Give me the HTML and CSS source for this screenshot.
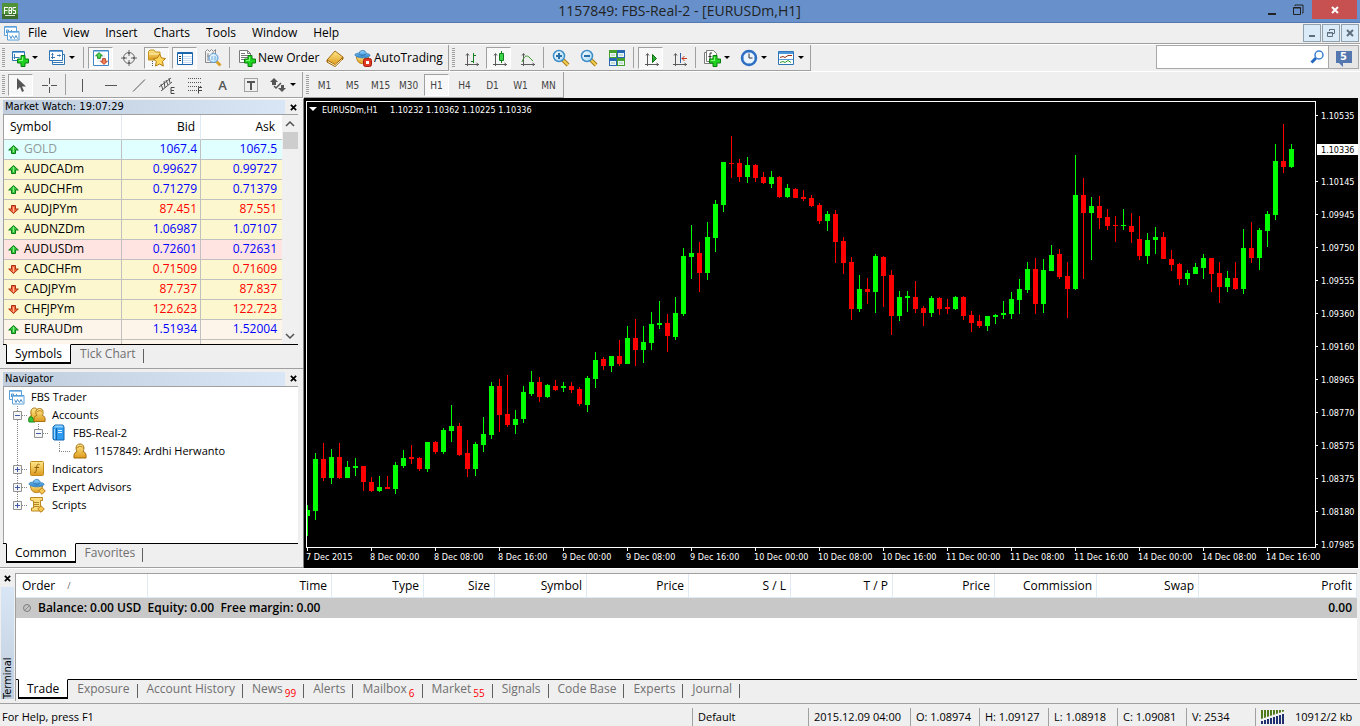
FILE: index.html
```html
<!DOCTYPE html>
<html lang="en">
<head>
<meta charset="utf-8">
<title>1157849: FBS-Real-2 - [EURUSDm,H1]</title>
<link rel="stylesheet" href="styles.css">
</head>
<body>
<svg class="defs" aria-hidden="true">
  <defs>
    <linearGradient id="gold" x1="0" y1="0" x2="0" y2="1"><stop offset="0" stop-color="#ffe88a"/><stop offset="1" stop-color="#dc9a1c"/></linearGradient>
    <linearGradient id="blue" x1="0" y1="0" x2="0" y2="1"><stop offset="0" stop-color="#8fd0fa"/><stop offset="1" stop-color="#2c86d0"/></linearGradient>
    <linearGradient id="lens" x1="0" y1="0" x2="1" y2="1"><stop offset="0" stop-color="#fff"/><stop offset="1" stop-color="#a4d8fa"/></linearGradient>
    <symbol id="plus" viewBox="0 0 12 12"><path d="M4 .5h4V4h3.500v4H8v3.500H4V8H.5V4H4z" fill="#21d321" stroke="#087d10"/><path d="M5.500 2v3.500H2" fill="none" stroke="#8cff80"/></symbol>
    <symbol id="up" viewBox="0 0 11 9"><path d="M5.500 .5L10.300 5H7.500v3.500h-4V5H.7z" fill="#35c53a" stroke="#0e7a18"/><path d="M5.500 2v5" stroke="#8df08d"/></symbol>
    <symbol id="down" viewBox="0 0 11 9"><path d="M5.500 8.500L10.300 4H7.500V.5h-4V4H.7z" fill="#f0683a" stroke="#a93012"/><path d="M5.500 2v5" stroke="#ffb899"/></symbol>
    <symbol id="charts" viewBox="0 0 16 16"><path d="M.5 1.500h12v9H.5z" fill="#fff" stroke="#5b9fd8"/><path d="M1 2.500h11" stroke="#8fc1ea"/><path d="M2.500 8V5h2v2m3-2v2h2" fill="none" stroke="#4b92d0"/><path d="M3.500 6.500h11.500v8.500H3.500z" fill="#fff" stroke="#5b9fd8"/><path d="M4 7.500h11" stroke="#8fc1ea"/><path d="M5.500 10.500l1.500 3 1.500-3 2 3 1.500-3 1.500 3" fill="none" stroke="#4b92d0"/></symbol>
    <symbol id="axes" viewBox="0 0 16 16"><path d="M4.500 16V4M2 14.500h14M3 5.500L4.500 3.500 6 5.500M13.500 13l2 1.500-2 1.500" fill="none" stroke="#5a5a5a"/></symbol>
    <symbol id="person" viewBox="0 0 14 16"><path d="M1 15c-.5-4 1-6 3-6.500C2.500 6 2.500 1 7 1s4.500 5 3 7.500c2.500.5 3.500 2.500 3 6.500z" fill="url(#gold)" stroke="#a26b0b"/><path d="M4.500 5c1-2 2-2 5-1" fill="none" stroke="#b77a13"/></symbol>
    <symbol id="hat" viewBox="0 0 18 16"><path d="M2.500 7c.5 6 3 8 6.500 8s5.500-2 6.500-7z" fill="url(#gold)" stroke="#b77b16"/><path d="M1 6c2 3.500 13 4 16 .5 0-1.500-2-2-4-2C12.500 0 6 0 5.500 4 3 4 1 4.500 1 6z" fill="url(#blue)" stroke="#3b83bb"/><path d="M5.500 5c2 1.500 5 1.500 7 0" fill="none" stroke="#2a6ca5"/></symbol>
    <symbol id="minus-box" viewBox="0 0 9 9"><path d="M.5 .5h8v8h-8z" fill="#f6f6f6" stroke="#919191"/><path d="M2 4.500h5" stroke="#3e5aa8"/></symbol>
    <symbol id="plus-box" viewBox="0 0 9 9"><path d="M.5 .5h8v8h-8z" fill="#f6f6f6" stroke="#919191"/><path d="M2 4.500h5M4.500 2v5" stroke="#3e5aa8"/></symbol>
    <symbol id="x" viewBox="0 0 8 8"><path d="M1 1l6 6M7 1L1 7" stroke="currentColor" stroke-width="2"/></symbol>
    <symbol id="diamond" viewBox="0 0 8 8"><path d="M4 .7L7.300 4 4 7.300.7 4z" fill="#f4c850" stroke="#b77b16"/></symbol>
  </defs>
</svg>

<div class="app">
  <header class="titlebar">
    <svg class="logo" width="16" height="16"><path d="M0 0h16v16H0z" fill="#4f9238"/><path d="M0 11h16v5H0z" fill="#3c6d2c"/><path d="M2 4.500h4M2.500 4v7M3 7.500h2.500M7 4.500h2.500v6H7zM7 7.500h2.500M14 4.500h-3v3h2.500v3H11" fill="none" stroke="#fff"/><path d="M3 12.500h10" stroke="#d5e8cf"/></svg>
    <h1>1157849: FBS-Real-2 - [EURUSDm,H1]</h1>
    <div class="winbtns">
      <button aria-label="Minimize"><svg width="10" height="12"><path d="M1 9h8v2H1z" fill="#222"/></svg></button>
      <button aria-label="Restore"><svg width="12" height="12"><path d="M3 2V1h8v8h-1M1.500 3.500h7v7h-7zM1 4h8" fill="none" stroke="#222"/></svg></button>
      <button class="close" aria-label="Close"><svg width="8" height="8"><use href="#x"/></svg></button>
    </div>
  </header>

  <nav class="menubar">
    <svg width="16" height="16"><use href="#charts"/></svg>
    <button>File</button><button>View</button><button>Insert</button><button>Charts</button><button>Tools</button><button>Window</button><button>Help</button>
    <div class="childbtns">
      <button aria-label="Minimize chart"><svg width="10" height="10"><path d="M2 7h6v2H2z" fill="#5d6e7e"/></svg></button>
      <button aria-label="Restore chart"><svg width="10" height="10"><path d="M3.500 3V1.500h5v4H7M1.500 4.500h5v4h-5zM1 5h6" fill="none" stroke="#5d6e7e"/></svg></button>
      <button aria-label="Close chart"><svg width="8" height="8"><use href="#x"/></svg></button>
    </div>
  </nav>

  <div class="toolrow">
    <div class="toolbar">
      <i class="grip"></i>
      <button class="combo" aria-label="New chart"><svg width="18" height="18"><path d="M1.500 2.500h12v9h-12z" fill="#fff" stroke="#2e75b6"/><path d="M2 3.500h11" stroke="#6fa8dc"/><path d="M3.500 5v5M2.500 8.500h6" stroke="#3c78b4"/><use href="#plus" x="6" y="6" width="12" height="12"/></svg></button>
      <button class="combo" aria-label="Profiles"><svg width="18" height="18"><path d="M4.500 5.500h12v10h-12z" fill="#fff" stroke="#2e75b6"/><path d="M1.500 1.500h13v10h-13z" fill="#fff" stroke="#2e75b6"/><path d="M2 2.500h12" stroke="#6fa8dc"/><path d="M4.500 4v6M3 8.500h4M9 6.500h4M3.500 5.500h2M11.500 5.500v2M4 13.500h11" stroke="#3c78b4" fill="none"/></svg></button>
      <i class="sep"></i>
      <button class="on" aria-label="Market Watch"><svg width="18" height="18"><path d="M1.500 1.500h15v15h-15z" fill="#fff" stroke="#3f86c6"/><path d="M2 2.500h14" stroke="#9cc8ee"/><path d="M5 8h8M5 10h8M5 12h8M5 6h8" stroke="#dde7f2"/><use href="#up" x="3" y="3" width="8" height="7"/><use href="#down" x="8" y="9" width="8" height="7"/></svg></button>
      <button aria-label="Data Window"><svg width="18" height="18"><circle cx="9" cy="9" r="5.500" fill="none" stroke="#666"/><path d="M9 1v6M9 11v6M1 9h6M11 9h6" stroke="#666"/><path d="M9 3v2M3 9h2M13 9h2M9 13v2" stroke="#666" stroke-width="2"/></svg></button>
      <button class="on" aria-label="Navigator"><svg width="18" height="18"><path d="M.5 11V2.500L2 1h4l1.500 2H12v8z" fill="url(#gold)" stroke="#c49322"/><path d="M1 5h10" stroke="#fff2b5"/><path d="M4.500 12v5" stroke="#555" stroke-dasharray="1 1"/><path d="M11.500 5l2 4 4 .5-3 3 .8 4.500-3.800-2-4 2 .8-4.500-3-3 4.200-.5z" fill="#ffd75a" stroke="#b57b12"/></svg></button>
      <button class="on" aria-label="Terminal"><svg width="18" height="18"><path d="M1.500 3.500h15v12h-15z" fill="#fff" stroke="#1d66ad"/><path d="M2 4.500h14" stroke="#1d66ad"/><path d="M6.500 5v10" stroke="#2e75b6"/><path d="M3 7.500h2M3 9.500h2M3 11.500h2" stroke="#333"/><path d="M7 7.500h9M7 9.500h9M7 11.500h9M7 13.500h9" stroke="#c9dcf0"/></svg></button>
      <button aria-label="Strategy Tester"><svg width="18" height="18"><path d="M1.500 2.500l2-2 2 2 2-2 2 2 2-2v13h-10z" fill="#f2f2f2" stroke="#8b8b8b"/><path d="M4 4v8M3 7h3M9 3v3" stroke="#888"/><path d="M12 12l4.500 4.500" stroke="#d7a12d" stroke-width="3"/><circle cx="9.500" cy="9" r="4.500" fill="url(#lens)" stroke="#5796cf"/><path d="M8 7v4M11 7v4" stroke="#7aaedb"/></svg></button>
      <i class="sep"></i>
      <button class="text order"><svg width="18" height="18"><path d="M1.500 1.500h8l3 3v9h-11z" fill="#fff" stroke="#7a7a7a"/><path d="M9.500 1.500v3h3" fill="none" stroke="#7a7a7a"/><path d="M3 4.500h4M3 6.500h7M3 8.500h7M3 10.500h5" stroke="#777"/><use href="#plus" x="6" y="6" width="12" height="12"/></svg>New Order</button>
      <button aria-label="MetaEditor"><svg width="18" height="18"><path d="M1 11l8-9 8 6-8 8z" fill="url(#gold)" stroke="#a56e12"/><path d="M1 11v2l8 4.500 8-7.500V8l-8 8z" fill="#c88415" stroke="#9c6410"/><path d="M2 12.500l7 4 7-6" fill="none" stroke="#fff0bd"/></svg></button>
      <button class="text auto"><svg width="18" height="18"><use href="#hat" width="17" height="16"/><rect x="9.500" y="9.500" width="8" height="8" rx="2" fill="#e03a24" stroke="#a81c10"/><path d="M12 12h3v3h-3z" fill="#fff"/></svg>AutoTrading</button>
    </div>
    <div class="toolbar">
      <i class="grip"></i>
      <button aria-label="Bar chart"><svg width="16" height="16"><use href="#axes"/><path d="M10.500 3v10M8 11.500h2M11 5.500h2" stroke="#12801c"/></svg></button>
      <button class="on" aria-label="Candlesticks"><svg width="16" height="16"><use href="#axes"/><path d="M10.500 1v12" stroke="#12801c"/><path d="M8.500 3.500h4v7h-4z" fill="#3cd44a" stroke="#12801c"/></svg></button>
      <button aria-label="Line chart"><svg width="16" height="16"><use href="#axes"/><path d="M3 12c2-6 5-7 7-5 1 1.500 3 3 4 4" fill="none" stroke="#3a9a2c"/></svg></button>
      <i class="sep"></i>
      <button aria-label="Zoom in"><svg width="18" height="18"><path d="M11 11l5 5" stroke="#a87c18" stroke-width="4"/><path d="M11 11l5 5" stroke="#f3cf55" stroke-width="2"/><circle cx="7" cy="7" r="5.500" fill="url(#lens)" stroke="#3e8fc8" stroke-width="1.500"/><path d="M4 7h6M7 4v6" stroke="#2b6fa8" stroke-width="2"/></svg></button>
      <button aria-label="Zoom out"><svg width="18" height="18"><path d="M11 11l5 5" stroke="#a87c18" stroke-width="4"/><path d="M11 11l5 5" stroke="#f3cf55" stroke-width="2"/><circle cx="7" cy="7" r="5.500" fill="url(#lens)" stroke="#3e8fc8" stroke-width="1.500"/><path d="M4 7h6" stroke="#2b6fa8" stroke-width="2"/></svg></button>
      <button aria-label="Tile windows"><svg width="18" height="18"><path d="M1 1h8v8H1zM9 9h8v8H9z" fill="#45a02c"/><path d="M9 1h8v8H9zM1 9h8v8H1z" fill="#2668b4"/><path d="M2 4h6v4H2zM10 4h6v4h-6zM2 12h6v4H2zM10 12h6v4h-6z" fill="#eaf5ff"/><path d="M3 6h4M11 6h4M3 14h4M11 14h4" stroke="#9fc6a0"/></svg></button>
      <i class="sep"></i>
      <button class="on" aria-label="Auto scroll"><svg width="16" height="16"><use href="#axes"/><path d="M9.500 4.500l4 4-4 4z" fill="#2cae34" stroke="#0d7015"/></svg></button>
      <button aria-label="Chart shift"><svg width="16" height="16"><use href="#axes"/><path d="M9.500 3v10" stroke="#2b5fa8"/><path d="M16 8.500h-5M13.500 6L11 8.500l2.500 2.500" fill="none" stroke="#c03818"/></svg></button>
      <i class="sep"></i>
      <button class="combo" aria-label="Indicators"><svg width="18" height="18"><path d="M1.500 3.500h9v11h-9z" fill="#fff" stroke="#7a7a7a"/><path d="M3.500 1.500h7l3 3v8h-10z" fill="#fff" stroke="#7a7a7a"/><path d="M9 4H7v7M5.500 7.500h3" fill="none" stroke="#333"/><use href="#plus" x="6" y="6" width="12" height="12"/></svg></button>
      <button class="combo" aria-label="Periods"><svg width="18" height="18"><circle cx="9" cy="9" r="7" fill="#eaf5ff" stroke="#2d6fc4" stroke-width="2.500"/><path d="M9 4.500V9h3.500" fill="none" stroke="#333"/><path d="M9 3v1M9 14v1M3 9h1M14 9h1" stroke="#4d86c8"/></svg></button>
      <button class="combo" aria-label="Templates"><svg width="18" height="18"><path d="M1.500 2.500h15v13h-15z" fill="#fff" stroke="#2e75b6"/><path d="M2 4h14" stroke="#4c96dc" stroke-width="2"/><path d="M2 10.500h14" stroke="#5c9cd6"/><path d="M3 8.500l3-1 2 1 3-2h4" fill="none" stroke="#9a2d18"/><path d="M3 13.500l3-1 2 1 3-2 3 2" fill="none" stroke="#2e9a2c"/></svg></button>
    </div>
    <form class="search">
      <input type="text" aria-label="Search">
      <svg width="14" height="14"><path d="M6 8l-4.500 4.500" stroke="#2568c0" stroke-width="3"/><circle cx="9" cy="5" r="4" fill="#fff" stroke="#3b82d4" stroke-width="1.500"/></svg>
      <button type="button"><span>5</span></button>
    </form>
  </div>

  <div class="toolrow">
    <div class="toolbar">
      <i class="grip"></i>
      <button class="on" aria-label="Cursor"><svg width="16" height="16"><path d="M4 1v12l3-3 2 5 2-1-2-4.500h4z" fill="#555"/></svg></button>
      <button aria-label="Crosshair"><svg width="16" height="16"><path d="M8.500 1v6M8.500 10v6M1 8.500h6M10 8.500h6" stroke="#555"/></svg></button>
      <i class="sep"></i>
      <button aria-label="Vertical line"><svg width="16" height="16"><path d="M7.500 2v13" stroke="#555"/></svg></button>
      <button aria-label="Horizontal line"><svg width="16" height="16"><path d="M2 8.500h12" stroke="#555"/></svg></button>
      <button aria-label="Trendline"><svg width="16" height="16"><path d="M2 14.500L14 2.500" stroke="#555"/></svg></button>
      <button aria-label="Equidistant channel"><svg width="18" height="18"><path d="M1 11L13 2M3 15L14 6M3 8l2 6M6 5l1 7M8 4l2 5M11 2l1 5" stroke="#555"/><path d="M16.500 11.500h-3.500v6h3.500M13 14.500h3" fill="none" stroke="#444"/></svg></button>
      <button aria-label="Fibonacci"><svg width="18" height="18"><path d="M2 2.500h14M2 6.500h14M2 10.500h14M2 14.500h9" stroke="#555" stroke-dasharray="1 1"/><path d="M16 11.500h-3.500v6M13 14.500h3" fill="none" stroke="#444"/></svg></button>
      <button class="letter">A</button>
      <button aria-label="Text label"><svg width="18" height="18"><path d="M2.500 2.500h13v13h-13z" fill="none" stroke="#555" stroke-dasharray="1 1"/><path d="M5 5h8v2h-3v7H8V7H5z" fill="#555"/></svg></button>
      <button class="combo" aria-label="Arrows"><svg width="18" height="18"><path d="M5 2L9 6H7v3H3V6H1zM13 16l4-4h-2V9h-3v3H9z" fill="#555"/><path d="M5 10l2 2 5-5" fill="none" stroke="#555" stroke-width="1.500"/></svg></button>
    </div>
    <div class="toolbar periods">
      <i class="grip"></i>
      <button>M1</button><button>M5</button><button>M15</button><button>M30</button><button class="on">H1</button><button>H4</button><button>D1</button><button>W1</button><button>MN</button>
    </div>
  </div>

  <main class="workspace">
    <aside class="dock">
      <section class="panel market">
        <header class="caption"><h2>Market Watch: 19:07:29</h2><button aria-label="Close Market Watch"><svg width="7" height="7"><use href="#x"/></svg></button></header>
        <div class="panel-body quotes-wrap">
          <table class="quotes">
            <thead><tr><th>Symbol</th><th>Bid</th><th>Ask</th></tr></thead>
            <tbody>
              <tr class="cyan rise"><td><svg width="11" height="9"><use href="#up"/></svg>GOLD</td><td>1067.4</td><td>1067.5</td></tr>
              <tr class="rise"><td><svg width="11" height="9"><use href="#up"/></svg>AUDCADm</td><td>0.99627</td><td>0.99727</td></tr>
              <tr class="rise"><td><svg width="11" height="9"><use href="#up"/></svg>AUDCHFm</td><td>0.71279</td><td>0.71379</td></tr>
              <tr class="fall"><td><svg width="11" height="9"><use href="#down"/></svg>AUDJPYm</td><td>87.451</td><td>87.551</td></tr>
              <tr class="rise"><td><svg width="11" height="9"><use href="#up"/></svg>AUDNZDm</td><td>1.06987</td><td>1.07107</td></tr>
              <tr class="pink rise"><td><svg width="11" height="9"><use href="#up"/></svg>AUDUSDm</td><td>0.72601</td><td>0.72631</td></tr>
              <tr class="fall"><td><svg width="11" height="9"><use href="#down"/></svg>CADCHFm</td><td>0.71509</td><td>0.71609</td></tr>
              <tr class="fall"><td><svg width="11" height="9"><use href="#down"/></svg>CADJPYm</td><td>87.737</td><td>87.837</td></tr>
              <tr class="fall"><td><svg width="11" height="9"><use href="#down"/></svg>CHFJPYm</td><td>122.623</td><td>122.723</td></tr>
              <tr class="cream rise"><td><svg width="11" height="9"><use href="#up"/></svg>EURAUDm</td><td>1.51934</td><td>1.52004</td></tr>
              <tr class="cream fall"><td><svg width="11" height="9"><use href="#down"/></svg>EURCADm</td><td>1.51417</td><td>1.51537</td></tr>
            </tbody>
          </table>
          <div class="scrollbar">
            <svg width="10" height="8"><path d="M1 6l4-4 4 4" fill="none" stroke="#505050" stroke-width="1.500"/></svg>
            <i></i>
            <svg width="10" height="8"><path d="M1 2l4 4 4-4" fill="none" stroke="#505050" stroke-width="1.500"/></svg>
          </div>
        </div>
        <div class="tabs"><button class="active">Symbols</button><button>Tick Chart</button></div>
      </section>

      <section class="panel navigator">
        <header class="caption"><h2>Navigator</h2><button aria-label="Close Navigator"><svg width="7" height="7"><use href="#x"/></svg></button></header>
        <div class="panel-body">
          <ul class="tree">
            <li><svg width="16" height="16"><use href="#charts"/></svg>FBS Trader</li>
            <li class="l1"><svg class="guide" width="15" height="18"><path d="M4.500 0v18M9 9.500h6" stroke="#888" stroke-dasharray="1 1"/><use href="#minus-box" y="5" width="9" height="9"/></svg><svg width="18" height="18"><g transform="translate(0 2)"><path d="M1 13c-.5-4 1-5 2.500-5.500C2 4 3 0 6.500 0S10 5 9 7.500l2 6z" fill="url(#gold)" stroke="#a26b0b"/><path d="M1 14c-1-4 1-6 3-5l3 5z" fill="#32c83c" stroke="#168a20"/></g><use href="#person" x="5" y="1" width="13" height="16"/></svg>Accounts</li>
            <li class="l2"><svg class="guide" width="36" height="18"><path d="M4.500 0v18M25.500 0v9M30 9.500h6" stroke="#888" stroke-dasharray="1 1"/><use href="#minus-box" x="21" y="5" width="9" height="9"/></svg><svg width="18" height="18"><path d="M4 3l2-2h8l1 2v13H5l-1-1z" fill="#2e9cf0" stroke="#1566ad"/><path d="M7.500 4v12" stroke="#1566ad"/><path d="M9 6.500h4M9 8.500h4" stroke="#d8f0ff"/><path d="M4.500 3.500L6.500 1.500h7l1 2z" fill="#8fd0ff"/><path d="M5.500 5v10" stroke="#9fd8ff"/></svg>FBS-Real-2</li>
            <li class="l3"><svg class="guide" width="57" height="18"><path d="M4.500 0v18M46.500 0v9M46 9.500h11" stroke="#888" stroke-dasharray="1 1" fill="none"/></svg><svg width="18" height="18"><use href="#person" x="3" y="1" width="14" height="16"/></svg>1157849: Ardhi Herwanto</li>
            <li class="l1"><svg class="guide" width="15" height="18"><path d="M4.500 0v18M9 9.500h6" stroke="#888" stroke-dasharray="1 1"/><use href="#plus-box" y="5" width="9" height="9"/></svg><svg width="18" height="18"><rect x="2.500" y="1.500" width="13" height="14" rx="1" fill="url(#gold)" stroke="#c08a1e"/><path d="M11.500 4.500c-2-1-2.500 0-3 4s-1 4.500-2.500 4M6.500 7.500h4.500" fill="none" stroke="#8c5a08"/></svg>Indicators</li>
            <li class="l1"><svg class="guide" width="15" height="18"><path d="M4.500 0v18M9 9.500h6" stroke="#888" stroke-dasharray="1 1"/><use href="#plus-box" y="5" width="9" height="9"/></svg><svg width="18" height="18"><use href="#hat" width="17" height="16"/><use href="#diamond" x="10" y="9" width="8" height="8"/></svg>Expert Advisors</li>
            <li class="l1"><svg class="guide" width="15" height="18"><path d="M4.500 0v9M9 9.500h6" stroke="#888" stroke-dasharray="1 1"/><use href="#plus-box" y="5" width="9" height="9"/></svg><svg width="18" height="18"><path d="M2.500 1.500h12v3h-2v7l2 1.500v2h-11v-3h2v-7l-3-1z" fill="#fbdc7c" stroke="#bb8720"/><path d="M6 6.500h5M6 8.500h5M6 10.500h5" stroke="#b4862a"/><use href="#diamond" x="9" y="9" width="8" height="8"/></svg>Scripts</li>
          </ul>
        </div>
        <div class="tabs"><button class="active">Common</button><button>Favorites</button></div>
      </section>
    </aside>

    <section class="chart">
      <svg id="chart" viewBox="304 98 1054 470" preserveAspectRatio="xMinYMin meet" role="img" aria-label="EURUSDm H1 candlestick chart"></svg>
    </section>
  </main>

  <section class="terminal">
    <div class="side"><button aria-label="Close Terminal"><svg width="7" height="7"><use href="#x"/></svg></button><h2>Terminal</h2></div>
    <div class="terminal-main">
      <div class="trades-wrap">
        <table class="trades">
          <colgroup><col class="c-order"><col class="c-time"><col class="c-type"><col class="c-size"><col class="c-type"><col class="c-num"><col class="c-num"><col class="c-num"><col class="c-num"><col class="c-num"><col class="c-num"><col></colgroup>
          <thead><tr><th><span class="sorted">Order <span class="sort">/</span></span></th><th>Time</th><th>Type</th><th>Size</th><th>Symbol</th><th>Price</th><th>S / L</th><th>T / P</th><th>Price</th><th>Commission</th><th>Swap</th><th>Profit</th></tr></thead>
          <tbody><tr><td colspan="11"><svg width="10" height="10"><circle cx="5" cy="5" r="3.500" fill="#c6c6c6" stroke="#7c7c7c"/><path d="M3 7l4-4" stroke="#8a8a8a"/></svg>Balance: 0.00 USD  Equity: 0.00  Free margin: 0.00</td><td>0.00</td></tr></tbody>
        </table>
      </div>
      <div class="tabs"><button class="active">Trade</button><button>Exposure</button><button>Account History</button><button>News<sub>99</sub></button><button>Alerts</button><button>Mailbox<sub>6</sub></button><button>Market<sub>55</sub></button><button>Signals</button><button>Code Base</button><button>Experts</button><button>Journal</button></div>
    </div>
  </section>

  <footer class="status">
    <span class="help">For Help, press F1</span>
    <span class="s-profile">Default</span>
    <span class="s-date">2015.12.09 04:00</span>
    <span class="s-val">O: 1.08974</span>
    <span class="s-val">H: 1.09127</span>
    <span class="s-val">L: 1.08918</span>
    <span class="s-val">C: 1.09081</span>
    <span class="s-val">V: 2534</span>
    <span class="s-net"><svg width="24" height="14"><path d="M1 0v14M4 0v14M7 0v14M10 0v14M13 0v14M16 0v14M19 0v14M22 0v14" stroke="#4f7a1c" stroke-width="2"/><path d="M0 9L24 1v13H0z" fill="#efefef"/><path d="M1 11v3M4 10v4M7 9v5M10 8v6M13 7v7M16 6v8M19 5v9M22 4v10" stroke="#1f2f70" stroke-width="2"/></svg>10912/2 kb</span>
  </footer>
</div>
<script src="chart.js"></script>
</body>
</html>
```
FILE: styles.css
```css
* { box-sizing: border-box; }
html, body { height: 100%; margin: 0; }
body { background: #efefef; color: #000; font: 12px/18px "Open Sans", "Noto Sans", sans-serif; overflow: hidden; }
button { margin: 0; padding: 0; border: 0; background: none; color: inherit; font: inherit; display: flex; align-items: center; justify-content: center; white-space: nowrap; }
svg { display: block; flex: none; }
h1, h2 { margin: 0; font-weight: 400; }
.defs { position: absolute; width: 0; height: 0; }
.app { display: flex; flex-direction: column; height: 100vh; }

.titlebar { display: flex; align-items: center; height: 23px; background: #6891cb; border-bottom: 1px solid #5478ae; }
.logo { margin-left: 2px; }
.titlebar h1 { flex: 1; padding-left: 82px; text-align: center; font-size: 14px; line-height: 22px; color: #222; }
.winbtns { display: flex; align-self: flex-start; margin-right: 3px; }
.winbtns button { width: 26px; height: 19px; }
.winbtns .close { width: 45px; margin-left: 1px; background: #c75050; color: #fff; }

.menubar { display: flex; align-items: center; height: 21px; padding-left: 4px; border-bottom: 1px solid #a0a0a0; }
.menubar > button { padding: 0 8px; }
.childbtns { display: flex; gap: 1px; margin-left: auto; margin-right: 1px; }
.childbtns button { width: 18px; height: 18px; background: #dcebf8; border: 1px solid #8fa0ae; color: #5d6e7e; }

.toolrow { display: flex; height: 27px; border-top: 1px solid #fff; }
.toolbar { display: flex; align-items: center; gap: 3px; padding-right: 2px; border-right: 1px solid #a0a0a0; border-bottom: 1px solid #a0a0a0; }
.toolbar + .toolbar { margin-left: 1px; }
.toolbar button { width: 25px; height: 22px; border: 1px solid transparent; }
.toolbar .on { background: #f8f8f8; border-color: #a0a0a0 #fff #fff #a0a0a0; }
.toolbar .combo { width: 34px; justify-content: flex-start; padding-left: 2px; gap: 3px; }
.toolbar .combo::after { content: ""; border: 3px solid transparent; border-top-color: #000; border-bottom: 0; }
.toolbar .text { justify-content: flex-start; padding-left: 3px; gap: 2px; }
.toolbar .order { width: 85px; }
.toolbar .auto { width: 96px; }
.toolbar .letter { font-size: 13px; font-weight: 600; color: #555; }
.toolbar.periods button { padding-top: 2px; font: 10px/14px "DejaVu Sans Condensed", "DejaVu Sans", sans-serif; color: #444; }
.grip { width: 3px; height: 20px; margin-left: 2px; background: repeating-linear-gradient(#a0a0a0 0 1px, transparent 1px 2px); }
.sep { width: 1px; height: 21px; margin: 0 1px; background: #a0a0a0; }
.search { display: flex; align-items: center; width: 203px; height: 24px; margin: 0 1px 0 auto; border: 1px solid #a8a8a8; background: #fff; }
.search input { flex: 1; min-width: 0; height: 20px; border: 0; outline: 0; background: none; }
.search > svg { margin-right: 4px; }
.search button { width: 30px; height: 22px; background: #e6e6e6; border-left: 1px solid #a8a8a8; }
.search span { position: relative; width: 16px; height: 12px; background: #5577b0; color: #fff; font: bold 11px/12px "DejaVu Sans Condensed", sans-serif; }
.search span::after { content: ""; position: absolute; left: 3px; top: 12px; border: 2px solid transparent; border-top-color: #5577b0; border-right-color: #5577b0; }

.workspace { display: flex; flex: 1; min-height: 0; padding-right: 2px; }
.dock { display: flex; flex-direction: column; width: 304px; border-right: 1px solid #808080; border-top: 1px solid #fff; }
.panel { display: flex; flex-direction: column; min-height: 0; padding: 1px 5px 2px 3px; border-bottom: 1px solid #a0a0a0; }
.market { flex: 272; }
.navigator { flex: 198; padding-top: 3px; }
.caption { display: flex; align-items: center; height: 14px; gap: 3px; }
.caption h2 { flex: 1; padding-left: 2px; font: 11px/14px "DejaVu Sans Condensed", "DejaVu Sans", sans-serif; background: linear-gradient(90deg, #bfcddd, #d8e6f6); }
.caption button { width: 10px; height: 14px; }
.panel-body { flex: 1; min-height: 0; overflow: hidden; background: #fff; border: 1px solid #a0a0a0; border-width: 1px 0 0 1px; }
.quotes-wrap { display: flex; }
.quotes { flex: 1; align-self: flex-start; table-layout: fixed; border-collapse: separate; border-spacing: 0; }
.quotes th { height: 25px; padding: 0 5px; font-weight: 400; text-align: right; border-right: 1px solid #dfeaf5; border-bottom: 1px solid #c0c0c0; }
.quotes th:first-child { width: 118px; padding-left: 6px; text-align: left; }
.quotes th:nth-child(2) { width: 79px; }
.quotes td { height: 20px; padding: 0 3px 1px; line-height: 18px; text-align: right; border-right: 1px solid #c0c0c0; border-bottom: 1px solid #c0c0c0; background: #fdf7d0; }
.quotes td:last-child, .quotes th:last-child { border-right: 0; padding-right: 5px; }
.quotes th:last-child { padding-right: 7px; }
.quotes td:first-child { display: flex; align-items: center; gap: 5px; padding-left: 4px; color: #000; }
.quotes .cyan td { background: #e0ffff; }
.quotes .cyan td:first-child { color: #909a9a; }
.quotes .pink td { background: #ffe4e1; }
.quotes .cream td { background: #fdf5e9; }
.rise { color: #00f; }
.fall { color: #f00; }
.scrollbar { display: flex; flex-direction: column; align-items: center; width: 16px; padding: 5px 0 4px; background: #f0f0f0; }
.scrollbar i { width: 15px; height: 17px; margin: 4px 0 auto; background: #cdcdcd; }

.tabs { display: flex; height: 22px; padding-left: 2px; border-top: 1px solid #000; color: #707070; }
.panel .tabs { padding-left: 3px; }
.tabs button { position: relative; height: 18px; padding: 0 8px 0 9px; }
.tabs button::after { content: ""; position: absolute; right: 0; top: 4px; height: 14px; border-right: 1px solid #606060; }
.tabs .active { height: 20px; margin-top: -1px; padding: 1px 8px 0; background: #fff; color: #000; border: 1px solid #000; border-top-color: #fff; border-bottom-width: 2px; }
.tabs .active::after { content: none; }
.tabs sub { align-self: flex-end; margin-left: 2px; font-size: 10px; line-height: 10px; color: #f00; }

.tree { margin: 0; padding: 1px 0 0 5px; list-style: none; font-size: 11px; }
.tree li { display: flex; align-items: center; gap: 6px; height: 18px; }
.tree .l1, .tree .l2, .tree .l3 { padding-left: 4px; }
.tree .guide { margin-right: -6px; }

.chart { flex: 1; min-width: 0; background: #000; }
.chart svg { width: 100%; height: 100%; }
.chart text { font: 9px "DejaVu Sans Condensed", "DejaVu Sans", sans-serif; fill: #fff; }
.chart .current { fill: #000; }

.terminal { display: flex; height: 136px; padding: 4px 3px 2px 0; border-top: 1px solid #fff; border-bottom: 1px solid #a0a0a0; }
.side { display: flex; flex-direction: column; align-items: center; width: 15px; padding: 1px 1px 2px 1px; }
.side button { width: 12px; height: 8px; margin-bottom: 5px; }
.side h2 { flex: 1; width: 13px; writing-mode: vertical-rl; transform: rotate(180deg); text-align: left; font: 11px/13px "DejaVu Sans Condensed", "DejaVu Sans", sans-serif; background: linear-gradient(#bfcddd, #d8e6f6); }
.terminal-main { display: flex; flex-direction: column; flex: 1; min-width: 0; border-left: 1px solid #a0a0a0; border-top: 1px solid #a0a0a0; }
.trades-wrap { flex: 1; min-height: 0; background: #fff; }
.trades { width: 100%; table-layout: fixed; border-collapse: separate; border-spacing: 0; }
.trades th { height: 24px; padding: 0 4px 0 0; font-weight: 400; text-align: right; border-right: 1px solid #dfeaf5; border-bottom: 1px solid #dfeaf5; }
.trades th:first-child { padding-left: 6px; }
.sorted { display: flex; align-items: center; gap: 12px; }
.sort { font-size: 9px; color: #666; }
.c-order { width: 132px; }
.c-time { width: 184px; }
.c-type { width: 92px; }
.c-size { width: 71px; }
.c-num { width: 102px; }
.trades td { height: 20px; padding: 0 5px 0 6px; background: #c8c8c8; font-weight: 600; line-height: 18px; white-space: pre; text-align: right; }
.trades td:first-child { text-align: left; }
.trades td svg { display: inline-block; margin-right: 6px; vertical-align: -1px; }

.status { display: flex; height: 22px; padding-top: 4px; font-size: 11px; }
.status span { padding-left: 5px; border-left: 1px solid #a0a0a0; white-space: nowrap; }
.status .help { flex: 1; padding-left: 2px; border: 0; }
.s-profile { width: 116px; }
.s-date { width: 102px; }
.s-val { width: 69px; }
.s-net { display: flex; align-items: center; gap: 10px; width: 105px; }
```
FILE: chart.js
```js
// Each candle: direction (1 up, 0 down), wick top, body top, body bottom, wick bottom.
const candles = [
[1,505,510,516,536],[1,453,459,511,520],[0,443,459,478,481],[1,449,457,478,484],[0,443,457,478,479],[1,461,467,478,478],[1,458,466,468,476],[0,466,466,482,491],
[0,477,482,491,492],[1,476,487,491,492],[0,476,487,489,489],[1,462,465,489,494],[1,450,458,466,468],[0,445,457,459,464],[0,457,458,469,471],[1,442,442,469,472],
[0,441,442,452,454],[1,428,430,452,454],[1,405,426,431,442],[0,423,426,455,456],[0,440,453,469,477],[1,442,444,469,476],[1,417,434,445,452],[1,382,386,435,439],
[0,379,386,415,432],[0,375,414,425,427],[1,410,419,425,434],[1,386,392,419,423],[1,371,382,394,396],[0,377,382,397,402],[1,384,385,397,398],[0,380,386,390,391],
[1,382,386,388,392],[0,382,386,390,393],[0,387,389,404,406],[1,376,378,405,412],[1,352,360,379,388],[0,357,359,366,370],[1,356,356,366,372],[0,340,356,364,366],
[1,326,338,364,364],[0,319,338,350,366],[1,326,342,350,363],[1,312,324,343,350],[1,301,323,325,329],[0,314,323,336,352],[1,297,313,337,340],[1,248,256,314,316],
[1,225,253,257,279],[0,242,253,273,292],[1,222,237,273,280],[1,200,204,238,252],[1,162,162,205,212],[0,136,163,164,178],[0,159,163,177,182],[1,157,165,177,183],
[0,164,165,178,182],[0,172,177,183,184],[1,171,177,184,188],[0,176,177,197,198],[1,184,188,197,198],[0,188,189,198,198],[0,190,197,199,201],[0,195,198,206,207],
[0,203,205,221,224],[1,211,214,221,231],[0,210,214,242,263],[0,237,241,263,274],[0,257,262,309,320],[1,275,289,309,312],[0,278,289,292,304],[1,254,256,292,313],
[0,256,257,276,307],[0,270,275,316,335],[1,291,297,316,321],[1,291,296,298,312],[0,281,297,309,313],[0,306,308,313,326],[1,296,298,313,317],[0,297,298,309,315],
[0,299,307,309,314],[1,296,297,309,310],[0,296,297,316,320],[0,311,315,323,332],[0,315,321,326,328],[1,316,316,326,331],[1,314,315,317,324],[1,301,313,315,319],
[1,292,299,314,319],[1,279,289,300,314],[1,262,269,290,293],[0,258,269,304,314],[1,259,270,304,313],[1,245,255,271,271],[0,249,254,277,279],[0,262,276,289,318],
[1,155,195,289,290],[0,178,195,213,279],[1,197,206,213,260],[0,196,206,218,229],[0,209,217,226,230],[0,216,225,226,242],[1,209,225,226,230],[0,213,226,232,243],
[0,216,239,256,260],[1,233,240,256,264],[1,227,237,240,254],[0,232,237,259,259],[0,250,259,265,271],[0,263,264,279,285],[1,270,273,279,285],[1,263,267,274,274],
[1,254,258,268,279],[0,258,258,274,292],[0,262,273,287,303],[1,271,278,287,292],[0,262,278,289,290],[1,229,248,289,294],[0,222,248,258,263],[1,228,230,258,270],
[1,211,214,231,247],[1,144,161,215,220],[0,124,161,167,173],[1,144,149,167,168]
];
const prices = ["1.10535", "", "1.10145", "1.09945", "1.09750", "1.09555", "1.09360", "1.09160", "1.08965", "1.08770", "1.08575", "1.08375", "1.08180", "1.07985"];
const times = ["7 Dec 2015", "8 Dec 00:00", "8 Dec 08:00", "8 Dec 16:00", "9 Dec 00:00", "9 Dec 08:00", "9 Dec 16:00", "10 Dec 00:00", "10 Dec 08:00", "10 Dec 16:00", "11 Dec 00:00", "11 Dec 08:00", "11 Dec 16:00", "14 Dec 00:00", "14 Dec 08:00", "14 Dec 16:00"];

const rect = (x, y, w, h, fill) => `<rect x="${x}" y="${y}" width="${w}" height="${h}" fill="${fill}"/>`;
const text = (x, y, s, cls = "") => `<text x="${x}" y="${y}" class="${cls}">${s}</text>`;

let out = rect(306, 101, 1010, 1, "#fff") + rect(306, 101, 1, 447, "#fff") + rect(306, 547, 1010, 1, "#fff") + rect(1315, 101, 1, 447, "#fff");
candles.forEach(([up, high, top, bottom, low], i) => {
  const x = 307 + i * 8;
  const left = i ? x - 2 : x;
  out += rect(x, high, 1, low - high, up ? "#0f0" : "#f00") + rect(left, top, x + 3 - left, bottom - top, up ? "#0f0" : "#f00");
});
prices.forEach((p, i) => {
  if (p) out += rect(1316, 115 + i * 33, 2, 1, "#fff") + text(1321, 119 + i * 33, p);
});
out += rect(1317, 144, 41, 11, "#fff") + text(1321, 153, "1.10336", "current");
times.forEach((t, i) => { out += rect(307 + i * 64, 548, 1, 3, "#fff") + text(306 + i * 64, 560, t); });
out += `<path d="M309 107h8l-4 4z" fill="#fff"/>` + text(322, 113, "EURUSDm,H1") + text(390, 113, "1.10232 1.10362 1.10225 1.10336");
document.getElementById("chart").innerHTML = out;
```
